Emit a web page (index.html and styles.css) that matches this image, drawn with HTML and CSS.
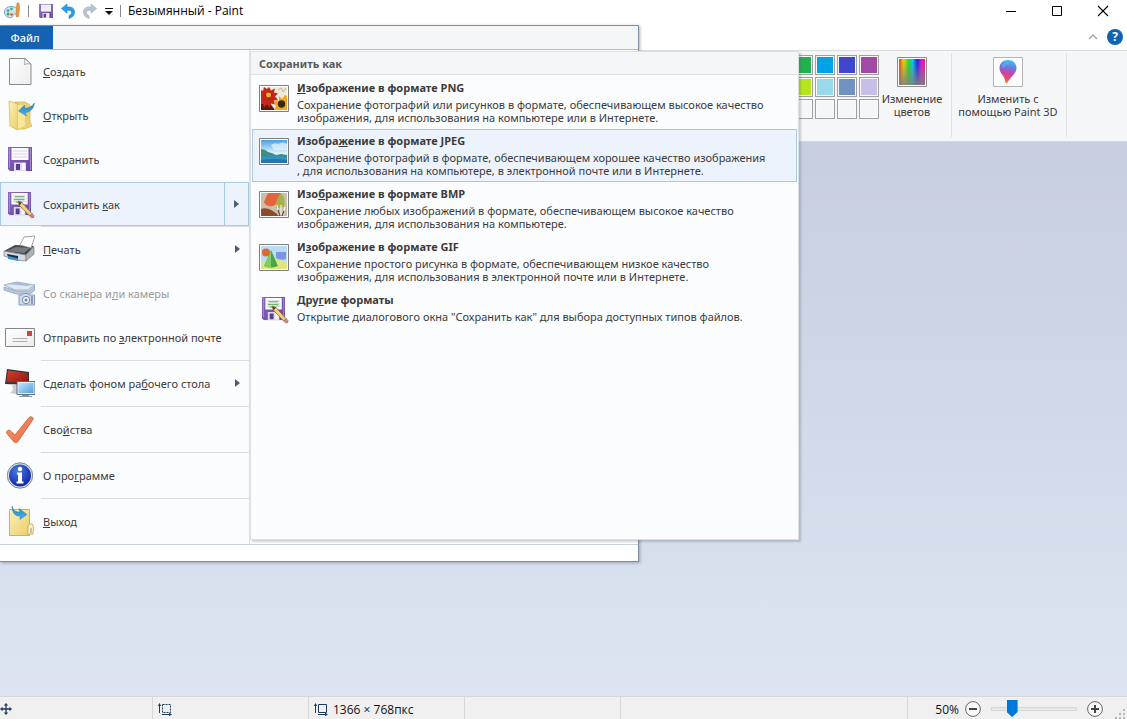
FILE: index.html
```
<!DOCTYPE html>
<html lang="ru">

<head>
    <meta charset="utf-8">
    <title>Безымянный - Paint</title>
    <link rel="stylesheet" href="styles.css">
</head>

<body>
    <svg class="defs" aria-hidden="true">
        <defs>
            <linearGradient id="purple" x1="0" y1="0" x2="1" y2="1">
                <stop offset="0" stop-color="#8a69bd" />
                <stop offset="1" stop-color="#6545a0" />
            </linearGradient>
            <linearGradient id="paper" x1="0" y1="0" x2="1" y2="1">
                <stop offset="0" stop-color="#ffffff" />
                <stop offset="1" stop-color="#ececee" />
            </linearGradient>
            <linearGradient id="folder" x1="0" y1="0" x2="1" y2="1">
                <stop offset="0" stop-color="#fbf0b8" />
                <stop offset="1" stop-color="#ecce68" />
            </linearGradient>
            <linearGradient id="blue" x1="0" y1="0" x2="0" y2="1">
                <stop offset="0" stop-color="#2f7fb8" />
                <stop offset="1" stop-color="#3fb4ea" />
            </linearGradient>
            <linearGradient id="screen" x1="0" y1="0" x2="1" y2="1">
                <stop offset="0" stop-color="#c3e5fb" />
                <stop offset="1" stop-color="#4f9fe0" />
            </linearGradient>
            <linearGradient id="red" x1="0" y1="0" x2="1" y2="1">
                <stop offset="0" stop-color="#d8402a" />
                <stop offset="1" stop-color="#8f1610" />
            </linearGradient>
            <linearGradient id="tick" x1="0" y1="0" x2="1" y2="1">
                <stop offset="0" stop-color="#f39a72" />
                <stop offset="1" stop-color="#e96a3c" />
            </linearGradient>
            <radialGradient id="info" cx=".4" cy=".3" r=".75">
                <stop offset="0" stop-color="#4a7be0" />
                <stop offset="1" stop-color="#0c23a4" />
            </radialGradient>
            <linearGradient id="sky" x1="0" y1="0" x2="0" y2="1">
                <stop offset="0" stop-color="#4d9fe0" />
                <stop offset=".6" stop-color="#e6f6fd" />
            </linearGradient>
            <linearGradient id="spectrum">
                <stop offset="0" stop-color="#ff3a00" />
                <stop offset=".18" stop-color="#f0d800" />
                <stop offset=".38" stop-color="#18e020" />
                <stop offset=".52" stop-color="#00d0e8" />
                <stop offset=".7" stop-color="#2018f0" />
                <stop offset=".88" stop-color="#e810e0" />
                <stop offset="1" stop-color="#ff1060" />
            </linearGradient>
            <linearGradient id="fade" x1="0" y1="0" x2="0" y2="1">
                <stop offset="0" stop-color="#808080" stop-opacity="0" />
                <stop offset="1" stop-color="#808080" stop-opacity=".9" />
            </linearGradient>
            <linearGradient id="drop" x1=".6" y1="0" x2=".4" y2="1">
                <stop offset="0" stop-color="#2fc8f0" />
                <stop offset=".3" stop-color="#6a7be0" />
                <stop offset=".55" stop-color="#c244b0" />
                <stop offset=".8" stop-color="#ee4a5a" />
                <stop offset="1" stop-color="#f7a030" />
            </linearGradient>

            <symbol id="floppy" viewBox="0 0 24 24">
                <path d="M0 0h24v24H2l-2-2z" fill="url(#purple)" />
                <path d="M3.500 1h17v12h-17z" fill="#fbfaff" />
                <path d="M5 4h14M5 7h14M5 10h14" stroke="#d5d3dd" />
                <path d="M6 15.500h12V24H6z" fill="#dcdbe6" />
                <path d="M8 17h4v6H8z" fill="#5b3e92" />
                <path d="M14 16h3v7h-3z" fill="#f7f7fb" />
                <path d="M1.500 1v20M22.500 1v22" stroke="#a68bd0" />
            </symbol>
            <symbol id="floppy-pen" viewBox="0 0 28 28">
                <use href="#floppy" width="24" height="24" />
                <path d="M7 5h10M6 8h11M8 10.500h7" stroke="#3da542" />
                <path d="M10.500 9.500l4 1.500 10.500 11.500-2.500 2.500L12 14z" fill="#f1cf7c" stroke="#8a6a35" stroke-width=".8" />
                <path d="M10.500 9.500l1.500 4.500 2.300-2.800z" fill="#4b443c" />
                <path d="M22.500 25l2.500-2.500 2 2q.5 2.300-2.300 2.500z" fill="#d58a80" stroke="#9a5248" stroke-width=".6" />
            </symbol>
        </defs>
    </svg>

    <header class="titlebar">
        <svg class="app-icon" viewBox="0 0 17 18">
            <path d="M7 4.500C2.500 4.500 0 7.500.5 11c.5 3.500 4 5 7 4.500 2-.3 1-2.500 2.500-3.200 2-.8 4.500.2 4.500-2.800C14.500 6 11 4.500 7 4.500z" fill="#cfe5f2" stroke="#7aa6c4" />
            <circle cx="4" cy="8.500" r="1.500" fill="#4aa5e0" />
            <circle cx="7.500" cy="7" r="1.400" fill="#58b848" />
            <circle cx="4" cy="12" r="1.500" fill="#45a84b" />
            <circle cx="7.500" cy="12.500" r="1.300" fill="#d65b42" />
            <path d="M13 1l2 .3.500 5-1.300 8.500-2.200-.4.500-8z" fill="#f09a3a" stroke="#c06f22" stroke-width=".6" />
        </svg>
        <span class="divider"></span>
        <button class="tool save" aria-label="Сохранить">
            <svg width="14" height="14"><use href="#floppy" /></svg>
        </button>
        <button class="tool" aria-label="Отменить">
            <svg width="14" height="16" viewBox="0 0 14 16">
                <path d="M6 1v3c5-.5 7.500 1.500 7.500 5.200 0 3.300-2.200 5.300-5.500 6.300v-3c1.800-.7 2.500-1.800 2.500-3C10.500 7.600 9 7 6 7.300v3L.5 5.500z" fill="#2d9be6" stroke="#1b7fc6" stroke-width=".6" />
            </svg>
        </button>
        <button class="tool" aria-label="Вернуть">
            <svg width="14" height="16" viewBox="0 0 14 16">
                <path d="M8 1v3C3 3.500.5 5.500.5 9.200c0 3.300 2.200 5.300 5.500 6.300v-3c-1.800-.7-2.500-1.800-2.500-3C3.500 7.600 5 7 8 7.300v3l5.500-4.800z" fill="#b9c3cf" stroke="#a3afbd" stroke-width=".6" />
            </svg>
        </button>
        <button class="tool more" aria-label="Настройка панели">
            <svg width="8" height="8" viewBox="0 0 8 8">
                <path d="M0 1.500h8" stroke="#111" />
                <path d="M0 4h8L4 8z" fill="#111" />
            </svg>
        </button>
        <span class="divider"></span>
        <h1 class="title">Безымянный - Paint</h1>
        <div class="window-buttons">
            <button aria-label="Свернуть">
                <svg width="12" height="12"><path d="M1 6.500h10" stroke="#000" /></svg>
            </button>
            <button aria-label="Развернуть">
                <svg width="12" height="12"><path d="M1.500 1.500h9v9h-9z" fill="none" stroke="#000" /></svg>
            </button>
            <button aria-label="Закрыть">
                <svg width="12" height="12"><path d="M1 1l10 10M11 1L1 11" stroke="#000" stroke-width="1.100" /></svg>
            </button>
        </div>
    </header>

    <div class="tabs">
        <button class="collapse" aria-label="Свернуть ленту">
            <svg width="10" height="6"><path d="M1 5l4-4 4 4" fill="none" stroke="#a9a9a9" stroke-width="1.500" /></svg>
        </button>
        <button class="help" aria-label="Справка">?</button>
    </div>

    <div class="ribbon">
        <div class="group colors">
            <div class="palette">
                <button class="swatch green" aria-label="Зеленый"></button>
                <button class="swatch turquoise" aria-label="Бирюзовый"></button>
                <button class="swatch indigo" aria-label="Индиго"></button>
                <button class="swatch violet" aria-label="Лиловый"></button>
                <button class="swatch lime" aria-label="Травяной"></button>
                <button class="swatch pale-turquoise" aria-label="Бледно-бирюзовый"></button>
                <button class="swatch blue-gray" aria-label="Сизый"></button>
                <button class="swatch lavender" aria-label="Светло-лиловый"></button>
                <button class="swatch" aria-label="Пустой"></button>
                <button class="swatch" aria-label="Пустой"></button>
                <button class="swatch" aria-label="Пустой"></button>
                <button class="swatch" aria-label="Пустой"></button>
            </div>
            <button class="big-button edit-colors">
                <svg width="30" height="30" viewBox="0 0 30 30">
                    <path d="M.5.500h29v29H.5z" fill="#fff" stroke="#8c8c8c" />
                    <path d="M2 2h26v26H2z" fill="url(#spectrum)" />
                    <path d="M2 2h26v26H2z" fill="url(#fade)" />
                </svg>
                <span>Изменение<br>цветов</span>
            </button>
        </div>
        <div class="group">
            <button class="big-button paint3d">
                <svg width="30" height="30" viewBox="0 0 30 30">
                    <path d="M.5.500h29v29H.5z" fill="#fdfdfe" stroke="#b5b5b5" />
                    <path d="M15 3c5 0 8.500 3.500 8.500 8 0 6-6 8-9.500 15.500-1.500 0-2-.8-2-3C12 19 6.500 16.500 6.500 11 6.500 6.500 10 3 15 3z" fill="url(#drop)" />
                    <path d="M9 8c2-4 7-5 10-2-4-.5-6 2-8 5-1.500 0-2.500-1-2-3z" fill="#56b4f0" opacity=".6" />
                </svg>
                <span>Изменить с<br>помощью Paint 3D</span>
            </button>
        </div>
    </div>

    <main class="workspace"></main>

    <footer class="statusbar">
        <div class="cell">
            <svg width="12" height="12" viewBox="0 0 12 12">
                <path d="M6 1v10M1 6h10" stroke="#1f3a63" stroke-width="1.300" />
                <path d="M6 0l2.200 2.500H3.800zM6 12l2.200-2.500H3.800zM0 6l2.500-2.200v4.400zM12 6L9.500 3.800v4.400z" fill="#1f3a63" />
            </svg>
        </div>
        <div class="cell">
            <svg width="14" height="13" viewBox="0 0 14 13">
                <path d="M4.500 1.500h8v8h-8z" fill="none" stroke="#1f3a63" stroke-dasharray="2 1" />
                <path d="M1.500 1v9M4 11.500h9" stroke="#1f3a63" />
                <path d="M1.500 0L3.200 3H-.2zM14 11.500l-3-1.700v3.400z" fill="#1f3a63" />
            </svg>
        </div>
        <div class="cell">
            <svg width="14" height="13" viewBox="0 0 14 13">
                <path d="M4.500 1.500h8v8h-8z" fill="none" stroke="#1f3a63" />
                <path d="M1.500 1v9M4 11.500h9" stroke="#1f3a63" />
                <path d="M1.500 0L3.200 3H-.2zM14 11.500l-3-1.700v3.400z" fill="#1f3a63" />
            </svg>
            <span>1366 × 768пкс</span>
        </div>
        <div class="cell"></div>
        <div class="zoom">
            <label for="zoom-range">50%</label>
            <button aria-label="Уменьшить">
                <svg width="16" height="16"><circle cx="8" cy="8" r="7.400" fill="#f8f8f8" stroke="#666" /><path d="M4 8h8" stroke="#444" stroke-width="2" /></svg>
            </button>
            <input type="range" id="zoom-range" min="0" max="100" value="20">
            <button aria-label="Увеличить">
                <svg width="16" height="16"><circle cx="8" cy="8" r="7.400" fill="#f8f8f8" stroke="#666" /><path d="M4 8h8M8 4v8" stroke="#444" stroke-width="2" /></svg>
            </button>
        </div>
        <svg class="grip" width="10" height="10"><path d="M8 0h2v2H8zM8 4h2v2H8zM8 8h2v2H8zM4 4h2v2H4zM4 8h2v2H4zM0 8h2v2H0z" fill="#b8b8b8" /></svg>
    </footer>

    <div class="file-menu">
        <div class="file-head">
            <button class="file-tab">Файл</button>
        </div>
        <nav class="commands">
            <button class="command">
                <svg viewBox="0 0 32 32">
                    <path d="M6.500 3.500H22l6 5.500v20.500H6.500z" fill="url(#paper)" stroke="#8b8b8b" />
                    <path d="M21.500 3.500c.5 2.500.5 4 0 6 2-.8 4-1 6.500-.5z" fill="#fff" stroke="#8b8b8b" stroke-width=".8" />
                </svg>
                <span><u>С</u>оздать</span>
            </button>
            <button class="command">
                <svg viewBox="0 0 32 32">
                    <path d="M12 3h10l5 3v17l2 4-7 3H12z" fill="#ecd06f" stroke="#d3b257" stroke-width=".7" />
                    <path d="M6 2l9 3v26l-8-4z" fill="url(#folder)" stroke="#d3b257" stroke-width=".7" />
                    <path d="M15 6h7v21l-7 3z" fill="#f8e69c" />
                    <path d="M31.500 4c-1 6-4 9-9 9.500l1 3.500-8-5 6-6 .5 3.500C25.500 9 28.500 8 31.500 4z" fill="url(#blue)" stroke="#2b83bb" stroke-width=".5" />
                </svg>
                <span><u>О</u>ткрыть</span>
            </button>
            <button class="command">
                <svg viewBox="0 0 32 32"><use href="#floppy" x="5" y="4" width="24" height="24" /></svg>
                <span>Со<u>х</u>ранить</span>
            </button>
            <button class="command active">
                <svg viewBox="0 0 32 32"><use href="#floppy-pen" x="5" y="4" width="27" height="27" /></svg>
                <span>Сохранить <u>к</u>ак</span>
                <i class="arrow"></i>
            </button>
            <hr>
            <button class="command">
                <svg viewBox="0 0 32 32">
                    <path d="M1 18l11-6 19 1-8 9z" fill="#44474b" />
                    <path d="M4 18l9-4 14 1-6 5z" fill="#777b80" />
                    <path d="M17 12l4-8 11-1-4 12z" fill="#fff" stroke="#8d8d8d" stroke-width=".8" />
                    <path d="M1 18l22 4v6l-10-1-12-4z" fill="#d7d9dc" stroke="#797c80" stroke-width=".7" />
                    <path d="M23 22l8-8v7l-8 7z" fill="#aeb1b5" stroke="#797c80" stroke-width=".7" />
                    <path d="M4 21l11 2v3L5 24z" fill="#1c2b3c" />
                    <path d="M5 23l9 2 2 3-11-2z" fill="#3d93d2" />
                </svg>
                <span><u>П</u>ечать</span>
                <i class="arrow"></i>
            </button>
            <button class="command" disabled>
                <svg viewBox="0 0 32 32">
                    <path d="M1 8l13-3 18 3-7 5H12z" fill="#e0e8f3" stroke="#8fa3bf" stroke-width=".8" />
                    <path d="M1 10l12 4h13l6-5v4l-5 4H13L1 13z" fill="#b9c8dd" stroke="#8fa3bf" stroke-width=".8" />
                    <path d="M4 7l10-2 15 3-5 1z" fill="#a9bbd5" />
                    <path d="M16 18h3l1-1.500h5l1 1.500h5.500v10H16z" fill="#cfdbea" stroke="#7d93b3" stroke-width=".9" />
                    <circle cx="23" cy="23" r="3.700" fill="#f1f5fa" stroke="#7489ab" />
                    <circle cx="23" cy="23" r="1.500" fill="#6e84a8" />
                    <path d="M29 19v8" stroke="#7489ab" stroke-width="1.500" />
                </svg>
                <span>Со сканера и<u>л</u>и камеры</span>
            </button>
            <button class="command">
                <svg viewBox="0 0 32 32">
                    <path d="M2.500 7.500h29v18h-29z" fill="url(#paper)" stroke="#858585" />
                    <path d="M24 10h5v5h-5z" fill="#d4403c" />
                    <path d="M9.500 17.500h15M9.500 20.500h15" stroke="#aeaeae" />
                </svg>
                <span>Отправить по <u>э</u>лектронной почте</span>
            </button>
            <hr>
            <button class="command">
                <svg viewBox="0 0 32 32">
                    <path d="M4 2l22 3v13L2 17z" fill="#34363a" />
                    <path d="M5 3.500l19.500 2.700V16L3.500 15z" fill="url(#red)" />
                    <path d="M9 17l5 1v6l4 4-11-2 3-3z" fill="#c9ced4" />
                    <path d="M14 14.500h18v13H14z" fill="#e6edf3" stroke="#54606c" stroke-width=".9" />
                    <path d="M15.500 16h15v10h-15z" fill="url(#screen)" />
                    <path d="M19 28h7v1h3v1H16v-1h3z" fill="#8b949d" />
                </svg>
                <span>Сделать фоном ра<u>б</u>очего стола</span>
                <i class="arrow"></i>
            </button>
            <hr>
            <button class="command">
                <svg viewBox="0 0 32 32">
                    <path d="M3.500 20c0-2.500 2-3.500 3.500-2.500l5 4.500L26 4.500c1.500-1.500 5-.5 4 2L15 28.500c-1.500 1.500-3 1.500-4.500 0z" fill="url(#tick)" stroke="#cf6138" stroke-width=".8" />
                </svg>
                <span>Сво<u>й</u>ства</span>
            </button>
            <hr>
            <button class="command">
                <svg viewBox="0 0 32 32">
                    <circle cx="17" cy="16.500" r="12.700" fill="#dadde3" stroke="#7f8591" />
                    <circle cx="17" cy="16.500" r="11" fill="url(#info)" />
                    <circle cx="17" cy="10" r="2.200" fill="#fff" />
                    <path d="M14 13.500h5v9h1.500v2h-7v-2H15v-7h-1z" fill="#fff" />
                </svg>
                <span>О про<u>г</u>рамме</span>
            </button>
            <hr>
            <button class="command">
                <svg viewBox="0 0 32 32">
                    <path d="M6.500 4.500h20v26h-20z" fill="url(#folder)" stroke="#d0b04f" />
                    <path d="M26 19h3q2 1 1 10h-5v-8z" fill="#fff6ce" stroke="#bda045" stroke-width=".8" />
                    <path d="M28 23v5" stroke="#b9b08a" stroke-width="1.500" />
                    <path d="M9 1c1 5 4 6 8 6l-1-3.500 8 6-7 5V11C12 11.500 9 7.500 9 1z" fill="url(#blue)" stroke="#2b83bb" stroke-width=".5" />
                </svg>
                <span><u>В</u>ыход</span>
            </button>
        </nav>
        <div class="file-foot"></div>

        <section class="submenu">
            <h2>Сохранить как</h2>
            <button class="format">
                <svg viewBox="0 0 30 27">
                    <path d="M.5.500h29v26H.5z" fill="#fff" stroke="#7f7f7f" />
                    <path d="M2 2h26v23H2z" fill="#efe9da" />
                    <path d="M2 19l8-2 6 8H2z" fill="#68130d" />
                    <path d="M10 2l2 3.500 4-2-1 4 4 1-3 3 3 3-4 1 1 4-4-1-1 4-3-3-3 3-1-4-2 1V5l2 1 1-4 3 2z" fill="#c4281a" />
                    <path d="M10 6l1 3 3 1-3 2-1 3-2-3-3-1 3-2z" fill="#8e150e" />
                    <circle cx="9.500" cy="10" r="2.500" fill="#efb229" />
                    <path d="M17 15l3 1v-5l3 3 3-4 2 1v14H15l2-4-2-3z" fill="#f0a81e" />
                    <circle cx="22.500" cy="19" r="3.700" fill="#402413" />
                    <path d="M19 5l3-2 2 4 3-4" fill="none" stroke="#c3b38f" />
                </svg>
                <span class="text">
                    <strong><u>И</u>зображение в формате PNG</strong>
                    <span>Сохранение фотографий или рисунков в формате, обеспечивающем высокое качество<br>изображения, для использования на компьютере или в Интернете.</span>
                </span>
            </button>
            <button class="format selected">
                <svg viewBox="0 0 30 27">
                    <path d="M.5.500h29v26H.5z" fill="#fff" stroke="#7f7f7f" />
                    <path d="M2 2h26v23H2z" fill="url(#sky)" />
                    <path d="M12 7q4-3 7-1 5-3 9 0v6H15z" fill="#e9f6fd" opacity=".7" />
                    <path d="M2 11q4 0 7 3 5 1 8 3l5-1 6 1v3H2z" fill="#3c8f80" />
                    <path d="M2 19q12-2 26 0v6H2z" fill="#3592c8" />
                    <path d="M2 22q12-2 26 0v3H2z" fill="#2576ad" />
                </svg>
                <span class="text">
                    <strong>Изобра<u>ж</u>ение в формате JPEG</strong>
                    <span>Сохранение фотографий в формате, обеспечивающем хорошее качество изображения<br>, для использования на компьютере, в электронной почте или в Интернете.</span>
                </span>
            </button>
            <button class="format">
                <svg viewBox="0 0 30 27">
                    <path d="M.5.500h29v26H.5z" fill="#fff" stroke="#7f7f7f" />
                    <path d="M2 2h26v23H2z" fill="#c9bfaa" />
                    <path d="M9 2h13l-5 11q-3 3-7 2-4-1-5-4z" fill="#e4643e" />
                    <path d="M22 2q5 5 3 14l-8 1q-1-7 5-15z" fill="#a8b24c" />
                    <path d="M2 18q8-3 18 7H2z" fill="#8f4a2c" />
                    <path d="M18 14l2 10M22 14l0 10M26 16l-2 8" stroke="#f5f2ea" stroke-width="1.200" />
                    <path d="M19 19l2 6M25 20l-2 5" stroke="#5a4a43" stroke-width="1.200" />
                </svg>
                <span class="text">
                    <strong>Изо<u>б</u>ражение в формате BMP</strong>
                    <span>Сохранение любых изображений в формате, обеспечивающем высокое качество<br>изображения, для использования на компьютере.</span>
                </span>
            </button>
            <button class="format">
                <svg viewBox="0 0 30 27">
                    <path d="M.5.500h29v26H.5z" fill="#fff" stroke="#7f7f7f" />
                    <path d="M2 2h26v23H2z" fill="#b9ddf6" />
                    <path d="M2 18q12-5 26 0v7H2z" fill="#e0e67e" />
                    <path d="M17 8h10v7q-5 2-10-1z" fill="#7d94e0" />
                    <path d="M12 6l7 16q-7 3-14 0z" fill="#4aa83f" />
                    <path d="M12 6l0 17q-4 0-7-1z" fill="#7fcc68" />
                    <circle cx="7" cy="8.500" r="4" fill="#dd6a2b" />
                </svg>
                <span class="text">
                    <strong>И<u>з</u>ображение в формате GIF</strong>
                    <span>Сохранение простого рисунка в формате, обеспечивающем низкое качество<br>изображения, для использования в электронной почте или в Интернете.</span>
                </span>
            </button>
            <button class="format">
                <svg viewBox="0 0 30 27"><use href="#floppy-pen" x="3" y="0" width="27" height="27" /></svg>
                <span class="text">
                    <strong>Дру<u>г</u>ие форматы</strong>
                    <span>Открытие диалогового окна "Сохранить как" для выбора доступных типов файлов.</span>
                </span>
            </button>
        </section>
    </div>
</body>

</html>
```
FILE: styles.css
```
* {
    box-sizing: border-box;
}

body {
    margin: 0;
    height: 100vh;
    display: flex;
    flex-direction: column;
    position: relative;
    overflow: hidden;
    font-family: "Noto Sans", "Open Sans", sans-serif;
    font-size: 11px;
    color: #3b3b3b;
    background-color: #fff;
}

button {
    margin: 0;
    padding: 0;
    border: none;
    background: none;
    font: inherit;
    color: inherit;
}

svg {
    display: block;
    flex-shrink: 0;
}

.defs {
    position: absolute;
    width: 0;
    height: 0;
}

/* title bar */

.titlebar {
    display: flex;
    align-items: center;
    height: 25px;
    padding: 0 1px 4px 4px;
}

.app-icon {
    width: 17px;
    height: 18px;
    margin-right: 7px;
}

.divider {
    width: 1px;
    height: 12px;
    background-color: #8a8a8a;
}

.tool {
    margin-right: 8px;
}

.save {
    margin-left: 10px;
}

.more {
    margin-right: 7px;
}

.title {
    margin: 0 0 0 7px;
    font-family: "Open Sans", sans-serif;
    font-size: 12px;
    font-weight: normal;
    line-height: 16px;
    color: #000;
}

.window-buttons {
    display: flex;
    margin-left: auto;
}

.window-buttons button {
    width: 46px;
    height: 20px;
    display: flex;
    align-items: center;
    justify-content: center;
}

.tabs {
    display: flex;
    align-items: center;
    justify-content: flex-end;
    gap: 9px;
    height: 25px;
    padding: 0 4px 1px 0;
}

.help {
    width: 16px;
    height: 16px;
    border-radius: 50%;
    background-color: #0f62b4;
    color: #fff;
    font-size: 12px;
    font-weight: bold;
    line-height: 16px;
}

/* ribbon */

.ribbon {
    display: flex;
    justify-content: flex-end;
    height: 92px;
    padding: 2px 60px 4px 0;
    border-top: 1px solid #dadbdc;
    border-bottom: 1px solid #d5d9e0;
    background-color: #f5f6f7;
}

.group {
    display: flex;
    padding-top: 2px;
    border-right: 1px solid #e0e1e3;
}

.palette {
    display: grid;
    grid-template-columns: repeat(4, 20px);
    grid-auto-rows: 20px;
    gap: 2px;
}

.swatch {
    border: 1px solid #a0a0a0;
    padding: 1px;
    background-clip: content-box;
    box-shadow: inset 0 0 0 1px #fafafa;
}

.green { background-color: #22b14c; }
.turquoise { background-color: #00a2e8; }
.indigo { background-color: #3f48cc; }
.violet { background-color: #a349a4; }
.lime { background-color: #b5e61d; }
.pale-turquoise { background-color: #99d9ea; }
.blue-gray { background-color: #7092be; }
.lavender { background-color: #c8bfe7; }

.big-button {
    display: flex;
    flex-direction: column;
    align-items: center;
    gap: 5px;
    padding-top: 2px;
    line-height: 13px;
}

.edit-colors {
    width: 66px;
    margin-right: 6px;
}

.paint3d {
    width: 114px;
    padding-right: 2px;
}

.workspace {
    flex: 1;
    background: linear-gradient(#c6cee0, #dce5f1);
}

/* status bar */

.statusbar {
    display: flex;
    height: 23px;
    border-top: 1px solid #d7d7d7;
    background-color: #f0f0f0;
    font-family: "Open Sans", sans-serif;
    font-size: 12px;
    color: #111;
}

.cell {
    display: flex;
    align-items: center;
    gap: 5px;
    width: 156px;
    padding: 2px 0 0 5px;
    border-right: 1px solid #d7d7d7;
}

.cell:first-child {
    width: 153px;
    padding-left: 0;
}

.zoom {
    display: flex;
    align-items: center;
    gap: 6px;
    margin-left: auto;
    padding: 2px 0 0 27px;
    border-left: 1px solid #d7d7d7;
}

.zoom input {
    width: 86px;
    height: 18px;
    margin: 0 4px;
    appearance: none;
    background: none;
}

.zoom input::-webkit-slider-runnable-track {
    height: 4px;
    border: 1px solid #d6d6d6;
    background-color: #e7eaea;
}

.zoom input::-webkit-slider-thumb {
    appearance: none;
    width: 11px;
    height: 17px;
    margin-top: -8px;
    background-color: #0078d7;
    clip-path: polygon(0 0, 100% 0, 100% 70%, 50% 100%, 0 70%);
}

.grip {
    align-self: flex-end;
    margin: 0 2px 0 12px;
}

/* file menu */

.file-menu {
    position: absolute;
    top: 25px;
    left: 0;
    width: 639px;
    border: 1px solid #7b8ea3;
    border-left: none;
    background-color: #fff;
    box-shadow: 1px 1px 3px rgba(60, 70, 100, 0.4);
}

.file-head {
    height: 24px;
    background-color: #f5f6f7;
    border-bottom: 1px solid #a9bdd3;
}

.file-tab {
    width: 53px;
    height: 23px;
    padding-right: 3px;
    background-color: #1563b0;
    color: #fff;
    font-size: 11px;
    font-weight: 500;
}

.commands {
    width: 250px;
    background-color: #fbfcfe;
    border-right: 1px solid #dcdfe3;
}

.command {
    display: flex;
    align-items: center;
    gap: 8px;
    width: 100%;
    height: 44px;
    padding: 0 0 2px 3px;
    text-align: left;
    white-space: nowrap;
}

.command svg {
    width: 32px;
    height: 32px;
}

.command:disabled {
    color: #9a9a9a;
}

.command.active {
    border: 1px solid #a8cbe4;
    background-color: #edf3fc;
    padding: 0 0 0 2px;
}

.arrow {
    display: flex;
    align-items: center;
    justify-content: center;
    align-self: stretch;
    width: 24px;
    margin-left: auto;
    border-left: 1px solid transparent;
}

.arrow::before {
    content: "";
    border: 4px solid transparent;
    border-left: 5px solid #4e5d70;
    border-right: none;
}

.active .arrow {
    border-left-color: #a8cbe4;
}

.commands hr {
    margin: 0 0 0 41px;
    height: 2px;
    border: none;
    border-top: 1px solid #dadcde;
}

.file-foot {
    height: 17px;
    border-top: 1px solid #c8d0d8;
}

/* save as */

.submenu {
    position: absolute;
    top: 25px;
    left: 250px;
    width: 549px;
    height: 489px;
    border: 1px solid #dcdfe3;
    background-color: #fbfcfe;
    box-shadow: 2px 2px 2px rgba(90, 100, 120, 0.3);
}

.submenu h2 {
    margin: 0 0 1px;
    padding: 1px 8px 0;
    height: 23px;
    border-bottom: 1px solid #dfe1e4;
    background-color: #f5f6f7;
    font-size: 11px;
    line-height: 22px;
    color: #5a5a5a;
}

.format {
    display: flex;
    align-items: flex-start;
    gap: 8px;
    width: 545px;
    height: 53px;
    margin-left: 1px;
    padding: 8px 6px 0;
    border: 1px solid transparent;
    text-align: left;
    white-space: nowrap;
    line-height: 13px;
}

.format svg {
    width: 30px;
    height: 27px;
}

.format.selected {
    border-color: #a8cbe4;
    background-color: #edf3fc;
}

.text {
    margin-top: -4px;
}

.text strong {
    display: block;
    margin-bottom: 4px;
}
```
